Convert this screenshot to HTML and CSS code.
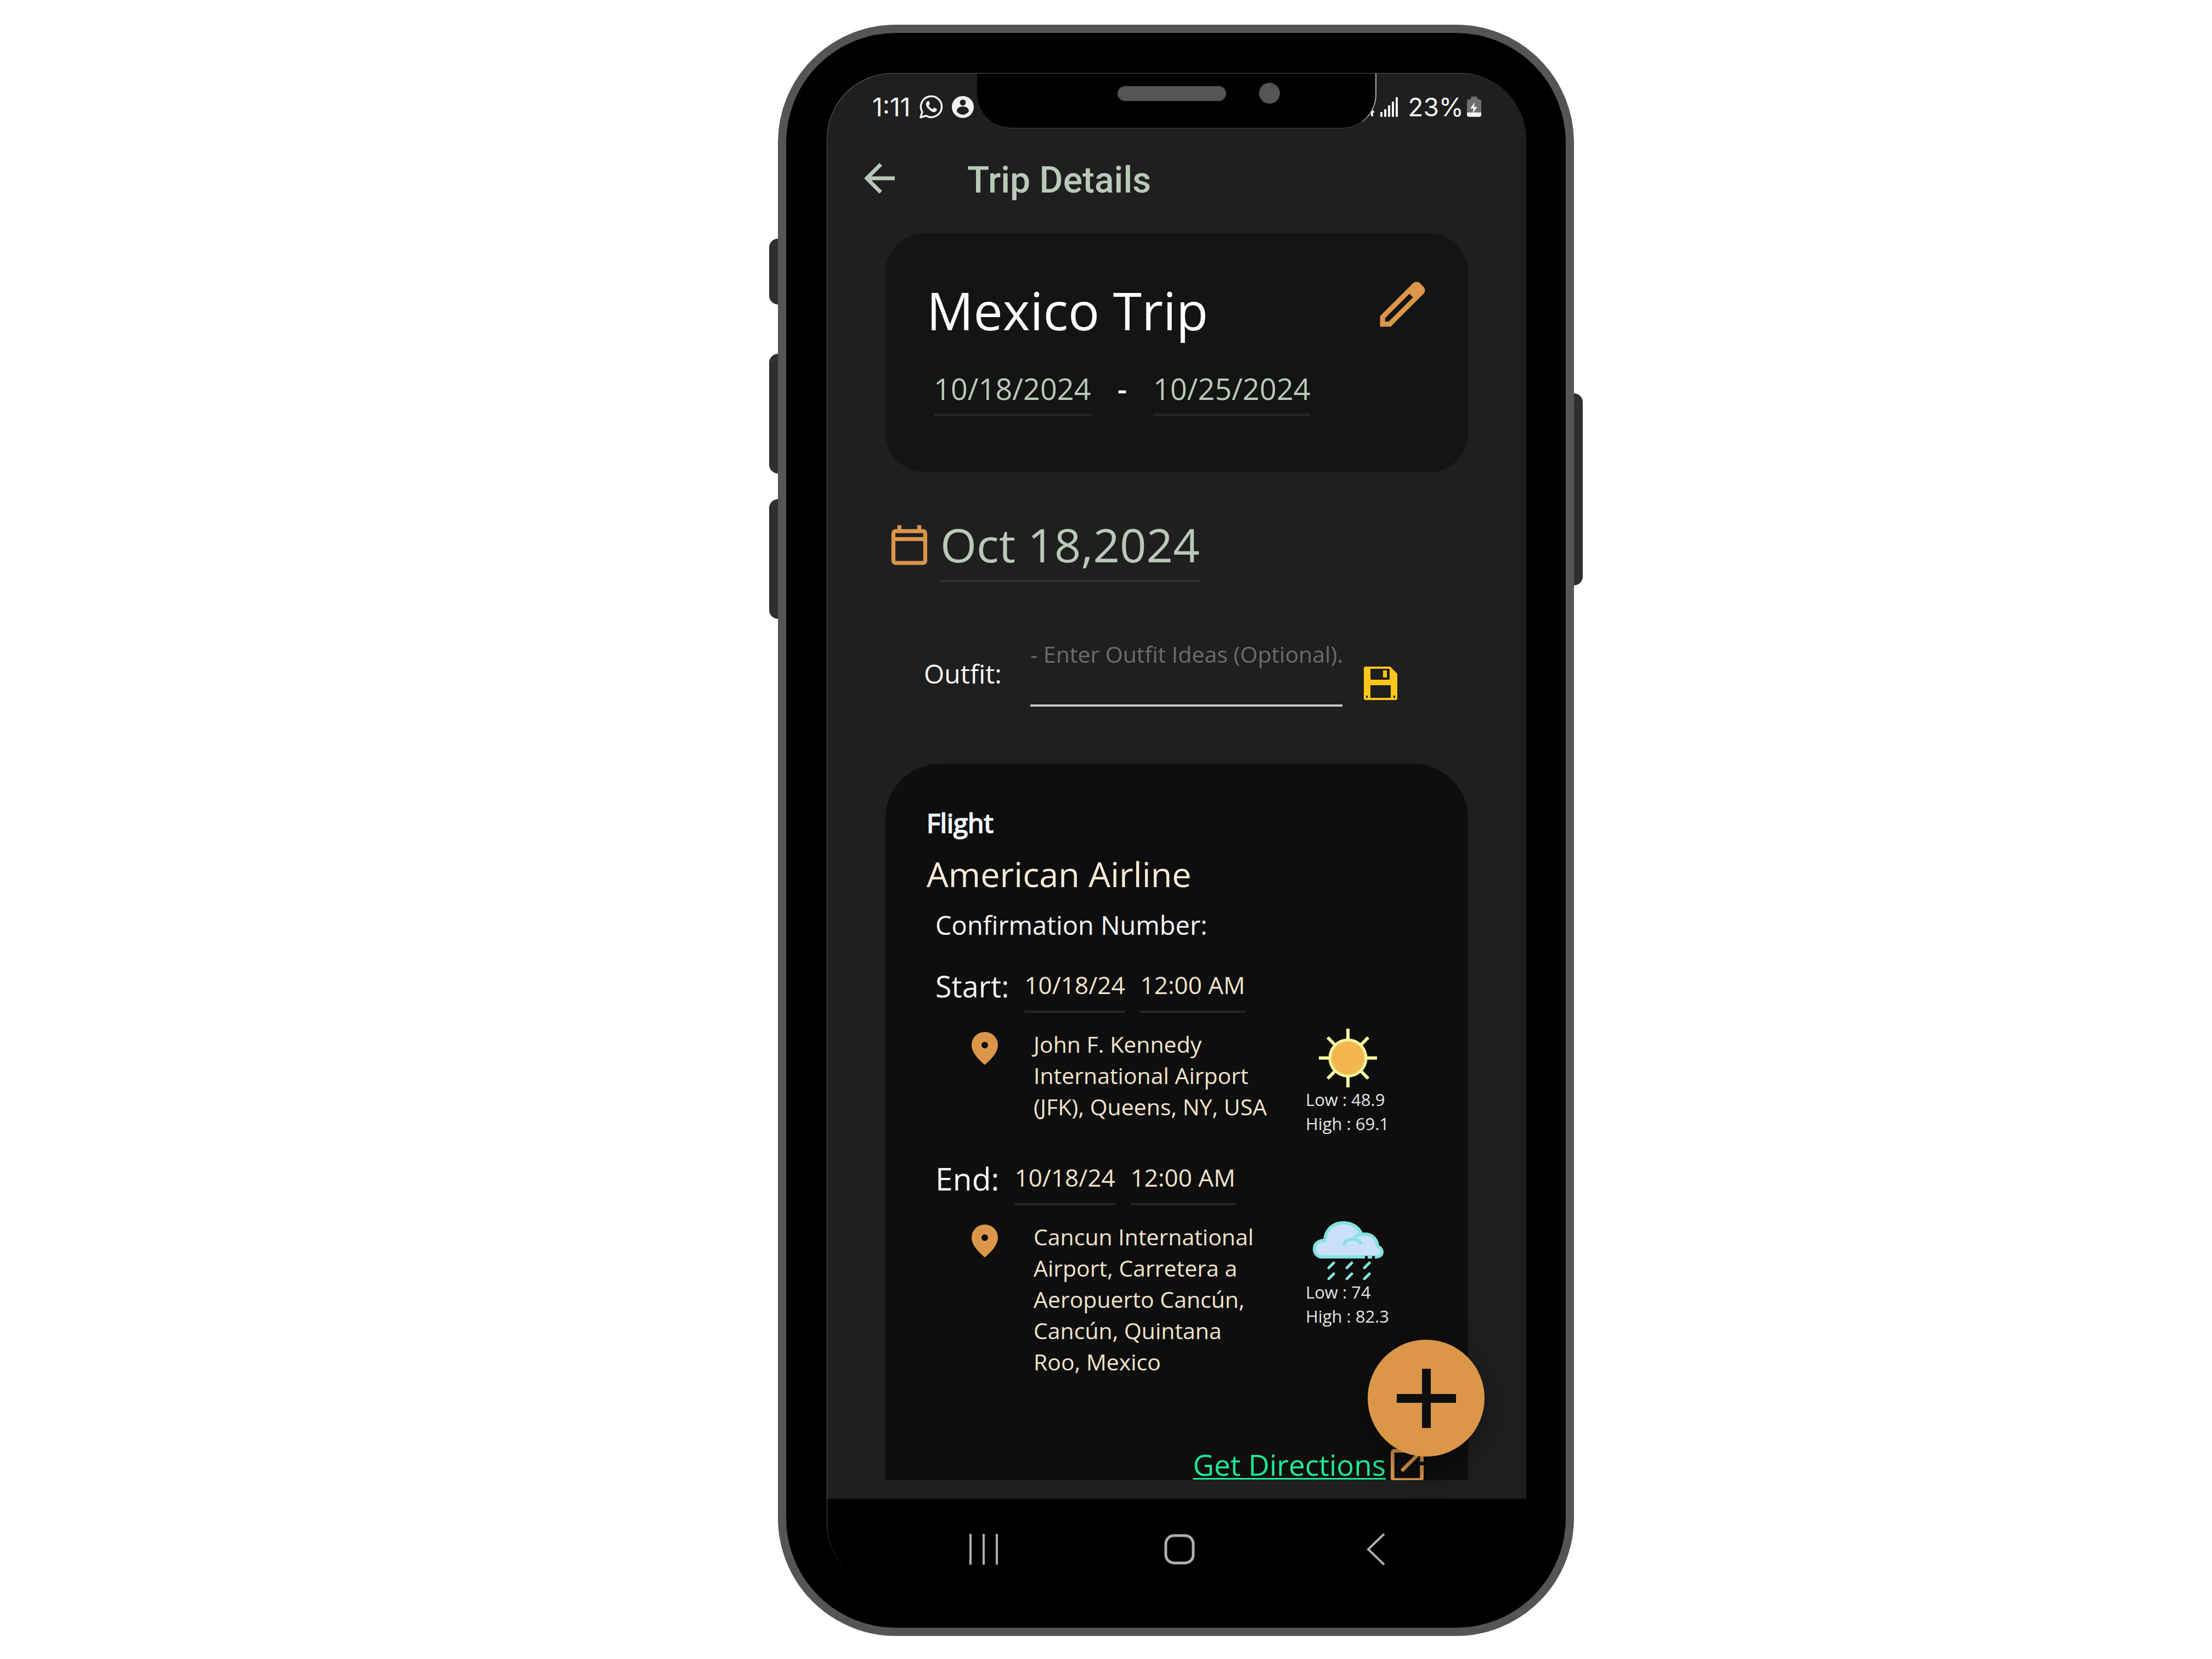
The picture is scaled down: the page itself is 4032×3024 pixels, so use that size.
FILE: index.html
```html
<!DOCTYPE html>
<html lang="en">
<head>
<meta charset="utf-8">
<title>Trip Details</title>
<link rel="stylesheet" href="styles.css">
</head>
<body>
<div class="stage">
  <div class="phone">
    <span class="side-key side-key-mute"></span>
    <span class="side-key side-key-up"></span>
    <span class="side-key side-key-down"></span>
    <span class="side-key side-key-power"></span>
    <div class="screen">
      <div class="status-bar">
        <div class="status-group">
          <span>1:11</span>
          <svg class="status-chat" viewBox="0 0 44 44" fill="none" stroke="#f2f2f2" stroke-width="3.5" stroke-linejoin="round"><path d="M3 41l3-10A19 19 0 1 1 13 38z"/><path d="M15 12c-4 4-2 10 4 15 5 5 10 6 13 2l1-3-5-3-3 3c-3-1-6-4-7-7l2-3-2-5z" fill="#f2f2f2" stroke="none"/></svg>
          <svg class="status-person" viewBox="0 0 40 40"><circle cx="20" cy="20" r="20" fill="#f2f2f2"/><circle cx="20" cy="12" r="5.500" fill="#1f1f1f"/><path d="M9 28c0-6 5-9 11-9s11 3 11 9c-3 4-7 6-11 6s-8-2-11-6z" fill="#1f1f1f"/></svg>
        </div>
        <div class="status-group status-right">
          <svg class="status-signal" viewBox="0 0 52 36" fill="#f2f2f2"><path d="M0 28l5-6 5 6H7v7H3v-7z"/><rect x="20" y="27" width="4" height="9" rx="1"/><rect x="27" y="22" width="4" height="14" rx="1"/><rect x="34" y="15" width="4" height="21" rx="1"/><rect x="41" y="8" width="4" height="28" rx="1"/><rect x="48" y="0" width="4" height="36" rx="1"/></svg>
          <span>23%</span>
          <svg class="status-battery" viewBox="0 0 26 38"><rect x="7" width="12" height="8" rx="2" fill="#6e6e6e"/><rect y="5" width="26" height="32" rx="4" fill="#6e6e6e"/><path d="M0 29h26v4q0 4-4 4H4q-4 0-4-4z" fill="#f2f2f2"/><path d="M14 10L6 22h6l-2 9 9-12h-6z" fill="#f2f2f2"/></svg>
        </div>
      </div>
      <div class="notch"><span class="speaker"></span><span class="camera"></span></div>

      <header class="app-bar">
        <button class="icon-button" type="button" aria-label="Back">
          <svg class="icon-back" viewBox="0 0 24 24" fill="currentColor"><path d="M20 11H7.830l5.590-5.590L12 4l-8 8 8 8 1.410-1.410L7.830 13H20z"/></svg>
        </button>
        <h1 class="app-title">Trip Details</h1>
      </header>

      <main class="content">
        <section class="trip-card">
          <div class="trip-head">
            <h2 class="trip-name">Mexico Trip</h2>
            <button class="icon-button accent" type="button" aria-label="Edit trip">
              <svg class="icon-edit" viewBox="0 -960 960 960" fill="currentColor"><path d="M200-200h57l391-391-57-57-391 391v57Zm-80 80v-170l528-527q12-11 26.500-17t30.500-6q16 0 31 6t26 18l55 56q12 11 17.500 26t5.500 30q0 16-5.500 30.500T817-647L290-120H120Z" fill-rule="evenodd"/></svg>
            </button>
          </div>
          <div class="trip-dates">
            <button class="field field-range" type="button">10/18/2024</button>
            <span class="dash">-</span>
            <button class="field field-range" type="button">10/25/2024</button>
          </div>
        </section>

        <div class="day">
          <svg class="icon-calendar accent" viewBox="0 -960 960 960" fill="currentColor"><path d="M200-80q-33 0-56.500-23.500T120-160v-560q0-33 23.500-56.500T200-800h40v-80h80v80h320v-80h80v80h40q33 0 56.500 23.500T840-720v560q0 33-23.500 56.500T760-80H200Zm0-80h560v-400H200v400Zm0-480h560v-80H200v80Z"/></svg>
          <button class="field field-day" type="button">Oct 18,2024</button>
        </div>

        <div class="outfit">
          <label class="outfit-label" for="outfit">Outfit:</label>
          <input class="outfit-input" id="outfit" type="text" placeholder="- Enter Outfit Ideas (Optional).">
          <button class="icon-button save" type="button" aria-label="Save outfit">
            <svg class="icon-save" viewBox="0 0 61 61"><path d="M3 0h45l13 13v45q0 3-3 3H3q-3 0-3-3V3q0-3 3-3zM12 4v18q0 2 2 2h31q2 0 2-2V4zM12 34v23h37V34zM4 53v4h3v-4zM54 53v4h3v-4z" fill="#ffc61a" fill-rule="evenodd"/><rect x="35" y="7" width="7" height="13" rx="1" fill="#ffc61a"/></svg>
          </button>
        </div>

        <section class="flight-card">
          <p class="kind">Flight</p>
          <h3 class="airline">American Airline</h3>
          <p class="confirmation">Confirmation Number:</p>

          <div class="leg">
            <div class="leg-time">
              <span class="leg-label">Start:</span>
              <button class="field field-leg" type="button">10/18/24</button>
              <button class="field field-leg" type="button">12:00 AM</button>
            </div>
            <div class="leg-place">
              <svg class="icon-pin accent" viewBox="0 -960 960 960" fill="currentColor"><path d="M480-480q33 0 56.500-23.500T560-560q0-33-23.500-56.500T480-640q-33 0-56.500 23.500T400-560q0 33 23.500 56.500T480-480Zm0 400Q319-217 239.500-334.500T160-552q0-150 96.500-239T480-880q127 0 223.500 89T800-552q0 100-79.500 217.500T480-80Z"/></svg>
              <p class="address">John F. Kennedy International Airport (JFK), Queens, NY, USA</p>
              <div class="weather">
                <svg class="icon-weather" viewBox="0 0 155 107"><g stroke="#fbf7a0" stroke-width="6"><path d="M77 0v107M24 53.500h106M40 16l74 75M114 16L40 91"/></g><circle cx="77" cy="53.500" r="33" fill="#f4b74f" stroke="#fbf7a0" stroke-width="5"/></svg>
                <p>Low : 48.9</p>
                <p>High : 69.1</p>
              </div>
            </div>
          </div>

          <div class="leg">
            <div class="leg-time">
              <span class="leg-label leg-label-end">End:</span>
              <button class="field field-leg" type="button">10/18/24</button>
              <button class="field field-leg" type="button">12:00 AM</button>
            </div>
            <div class="leg-place">
              <svg class="icon-pin accent" viewBox="0 -960 960 960" fill="currentColor"><path d="M480-480q33 0 56.500-23.500T560-560q0-33-23.500-56.500T480-640q-33 0-56.500 23.500T400-560q0 33 23.500 56.500T480-480Zm0 400Q319-217 239.500-334.500T160-552q0-150 96.500-239T480-880q127 0 223.500 89T800-552q0 100-79.500 217.500T480-80Z"/></svg>
              <p class="address">Cancun International Airport, Carretera a Aeropuerto Cancún, Cancún, Quintana Roo, Mexico</p>
              <div class="weather">
                <svg class="icon-weather" viewBox="0 0 155 107" fill="none" stroke="#84e3e0" stroke-linecap="round"><path d="M28 65a14 14 0 0 1-12-15c0-9 7-15 19-15C36 15 50 3 69 3c15 0 28 8 33 21 15-3 28 6 29 22 6 2 8 7 8 10 0 6-5 9-10 9z" fill="#cbe1f8" stroke-width="6"/><path d="M69 44c3-14 26-16 32-2M90 29c3-3 7-4 12-5" stroke-width="6" stroke-linecap="butt"/><path d="M108 66h5M121 66h5" stroke="#0e0e0e" stroke-width="5" stroke-linecap="butt"/><path d="M42 85l9-9M75 85l9-9M107 85l9-9M42 105l9-9M75 105l9-9M107 105l9-9" stroke-width="5"/></svg>
                <p>Low : 74</p>
                <p>High : 82.3</p>
              </div>
            </div>
          </div>

          <a class="directions" href="#directions">
            <span class="directions-text">Get Directions</span>
            <svg class="icon-open accent" viewBox="120 -840 720 684" fill="currentColor"><path d="M200-120q-33 0-56.500-23.500T120-200v-560q0-33 23.500-56.500T200-840h280v80H200v560h560v-280h80v280q0 33-23.500 56.500T760-120H200Zm188-212-56-56 372-372H560v-80h280v280h-80v-144L388-332Z"/></svg>
          </a>
        </section>
      </main>

      <button class="fab" type="button" aria-label="Add">
        <svg class="icon-add" viewBox="0 0 108 108" fill="#0e0e0e"><path d="M46 0h16v46h46v16H62v46H46V62H0V46h46z"/></svg>
      </button>

      <nav class="nav-bar">
        <button class="icon-button" type="button" aria-label="Recent apps"><svg class="icon-nav" viewBox="0 0 58 58" fill="none" stroke="#b0b0b0" stroke-width="4"><path d="M5 1v56M29 1v56M53 1v56"/></svg></button>
        <button class="icon-button" type="button" aria-label="Home"><svg class="icon-nav" viewBox="0 0 58 58" fill="none" stroke="#b0b0b0" stroke-width="5"><rect x="4" y="4" width="50" height="50" rx="15"/></svg></button>
        <button class="icon-button" type="button" aria-label="Back"><svg class="icon-nav" viewBox="0 0 58 58" fill="none" stroke="#b0b0b0" stroke-width="4"><path d="M45 1L16 29l29 28"/></svg></button>
      </nav>
    </div>
  </div>
</div>
</body>
</html>
```
FILE: styles.css
```css
* {
  box-sizing: border-box;
}

body {
  margin: 0;
  background: #fff;
  font-family: "Open Sans", "Noto Sans", sans-serif;
  color: #f7f7f7;
}

h1, h2, h3, p {
  margin: 0;
  font-weight: 400;
}

svg {
  display: block;
  flex: none;
}

button {
  margin: 0;
  padding: 0;
  border: 0;
  background: none;
  color: inherit;
  font: inherit;
  cursor: pointer;
}

.accent {
  color: #db964a;
}

.stage {
  display: grid;
  grid-template-columns: 1418fr minmax(1400px, 1451fr) 1163fr;
  padding: 45px 0 42px;
}

/* Device frame */
.phone {
  grid-column: 2;
  position: relative;
  padding: 74px 72px 70px 75px;
  border: 15px solid #555;
  border-radius: 215px;
  background: #000;
}

.side-key {
  position: absolute;
  left: -31px;
  width: 16px;
  border-radius: 16px 0 0 16px;
  background: #2f2f2f;
}

.side-key-mute {
  top: 375px;
  height: 120px;
}

.side-key-up {
  top: 585px;
  height: 218px;
}

.side-key-down {
  top: 850px;
  height: 218px;
}

.side-key-power {
  left: auto;
  right: -31px;
  top: 657px;
  height: 350px;
  border-radius: 0 16px 16px 0;
}

.screen {
  position: relative;
  overflow: hidden;
  border-radius: 120px;
  background: #1f1f1f;
  box-shadow: -1px -1px 0 #555;
}

.notch {
  position: absolute;
  top: 0;
  left: 273px;
  right: 273px;
  height: 100px;
  border-right: 2px solid #aaa;
  border-bottom: 1px solid #444;
  border-radius: 0 0 62px 62px;
  background: #000;
}

.speaker {
  position: absolute;
  top: 23px;
  left: 256px;
  width: 198px;
  height: 27px;
  border-radius: 14px;
  background: #555;
}

.camera {
  position: absolute;
  top: 17px;
  left: 514px;
  width: 38px;
  height: 38px;
  border-radius: 50%;
  background: #555;
}

/* Status bar */
.status-bar {
  display: flex;
  justify-content: space-between;
  height: 122px;
  padding: 0 82px 0 82px;
  font: 400 46px/122px Inter, Roboto, sans-serif;
  color: #f2f2f2;
}

.status-group {
  display: flex;
  align-items: center;
  gap: 16px;
}

.status-right {
  gap: 6px;
}

.status-chat {
  width: 44px;
  height: 44px;
}

.status-person {
  width: 40px;
  height: 40px;
}

.status-signal {
  width: 52px;
  height: 36px;
  margin-right: 12px;
}

.status-battery {
  width: 26px;
  height: 38px;
}

/* App bar */
.app-bar {
  display: flex;
  align-items: center;
  gap: 118px;
  height: 138px;
  padding-left: 53px;
  color: #b9c9b9;
}

.icon-back {
  width: 84px;
  height: 84px;
}

.app-title {
  padding-top: 8px;
  font: 500 66px/84px Roboto, sans-serif;
}

.content {
  padding: 31px 106px 34px;
}

/* Date and time pickers */
.field {
  display: block;
  border-bottom: 4px solid #262626;
  text-align: left;
  white-space: nowrap;
}

.field-range {
  padding-bottom: 9px;
  font-size: 54px;
  line-height: 74px;
  color: #b9c9b9;
}

.field-day {
  padding-bottom: 8px;
  border-color: #303030;
  font-size: 85px;
  line-height: 114px;
  color: #b9c9b9;
}

.field-leg {
  margin-top: 5px;
  padding-bottom: 17px;
  font-size: 44px;
  line-height: 60px;
  color: #f2e3cb;
}

/* Trip summary */
.trip-card {
  padding: 75px 65px 103px 75px;
  border-radius: 72px;
  background: #141414;
}

.trip-head {
  display: flex;
  align-items: flex-start;
  justify-content: space-between;
}

.trip-name {
  font-size: 95px;
  line-height: 130px;
  color: #fff;
}

.icon-edit {
  width: 109px;
  height: 109px;
}

.trip-dates {
  display: flex;
  gap: 48px;
  margin-top: 41px;
  padding-left: 13px;
}

.dash {
  font-size: 54px;
  font-weight: 600;
  line-height: 74px;
  color: #fff;
}

/* Day heading */
.day {
  display: flex;
  align-items: flex-start;
  gap: 13px;
  margin-top: 74px;
}

.icon-calendar {
  width: 87px;
  height: 87px;
  margin-top: 15px;
}

/* Outfit form row */
.outfit {
  display: flex;
  align-items: center;
  margin: 102px 0 104px;
  padding: 0 129px 0 70px;
}

.outfit-label {
  width: 194px;
  padding-top: 4px;
  font-size: 48px;
  line-height: 66px;
}

.outfit-input {
  flex: 1;
  min-width: 0;
  height: 125px;
  padding: 0 0 63px;
  border: 0;
  border-bottom: 4px solid #c8c8c8;
  border-radius: 0;
  outline: 0;
  background: none;
  color: #f7f7f7;
  font: 400 41px/58px "Open Sans", sans-serif;
}

.outfit-input::placeholder {
  color: #6c6c6c;
  opacity: 1;
}

.save {
  margin-left: 39px;
  padding-top: 40px;
}

.icon-save {
  width: 61px;
  height: 61px;
}

/* Flight details */
.flight-card {
  padding: 75px 81px 0 75px;
  border-radius: 100px 100px 0 0;
  background: #0e0e0e;
}

.kind {
  font-size: 48px;
  line-height: 66px;
  color: #f0f8ff;
  -webkit-text-stroke: 2px #f0f8ff;
}

.airline {
  margin-top: 16px;
  font-size: 63px;
  line-height: 88px;
  color: #faebd7;
}

.confirmation {
  margin-top: 16px;
  padding-left: 16px;
  font-size: 47px;
  line-height: 66px;
}

.leg {
  margin-top: 41px;
  padding-left: 16px;
}

.leg-time {
  display: flex;
  align-items: flex-start;
  gap: 28px;
}

.leg-label {
  font-size: 54px;
  line-height: 74px;
}

.leg-label-end {
  font-size: 57px;
}

.leg-place {
  display: flex;
  align-items: flex-start;
  margin-top: 29px;
  padding-left: 54px;
}

.icon-pin {
  width: 72px;
  height: 72px;
}

.address {
  width: 430px;
  margin-left: 53px;
  font-size: 41px;
  line-height: 57px;
  color: #f2e3cb;
}

.weather {
  margin-left: 66px;
  font-size: 31px;
  line-height: 44px;
  color: #e6e6e6;
}

.icon-weather {
  width: 155px;
  height: 107px;
}

.directions {
  display: flex;
  justify-content: flex-end;
  gap: 9px;
  height: 57px;
  margin-top: 130px;
  font-size: 53px;
  line-height: 57px;
  color: #1fe896;
  text-decoration: none;
}

.directions-text {
  text-decoration: underline 3px;
  text-underline-offset: 4px;
}

.icon-open {
  width: 60px;
  height: 57px;
}

/* Floating action button */
.fab {
  position: absolute;
  right: 76px;
  bottom: 242px;
  display: grid;
  place-items: center;
  width: 213px;
  height: 213px;
  border-radius: 50%;
  background: #db964a;
  box-shadow: 0 16px 60px rgba(0, 0, 0, 0.4);
}

.icon-add {
  width: 108px;
  height: 108px;
}

/* System navigation */
.nav-bar {
  position: relative;
  display: grid;
  grid-template-columns: repeat(3, 1fr);
  height: 165px;
  padding: 18px 97px 0 107px;
  background: #000;
}

.nav-bar .icon-button {
  display: grid;
  place-items: center;
}

.icon-nav {
  width: 58px;
  height: 58px;
}
```
